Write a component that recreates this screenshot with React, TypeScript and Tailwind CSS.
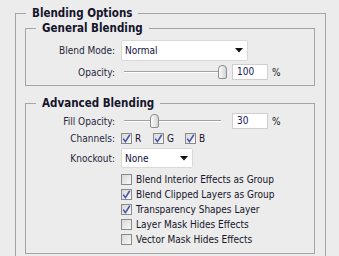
import React from "react";

const font = { fontFamily: '"DejaVu Sans Condensed", "DejaVu Sans", Tahoma, sans-serif', fontStretch: "condensed" };

function Legend({ children, outer }: { children: React.ReactNode; outer?: boolean }) {
  return (
    <legend
      className={`${outer ? "ml-[1px]" : "ml-[10px]"} px-[6px] text-[11.5px] leading-[14px] font-bold text-[#14142a]`}
    >
      {children}
    </legend>
  );
}

function Label({ children }: { children: React.ReactNode }) {
  return <span className="w-[90px] shrink-0 text-right text-[10px] text-[#26263a] pr-[1px]">{children}</span>;
}

function Arrow() {
  return (
    <svg width="8" height="5" viewBox="0 0 8 5" className="shrink-0">
      <path d="M0 0 H8 L4 4.5 Z" fill="#111" />
    </svg>
  );
}

function Select({ value, width }: { value: string; width: string }) {
  return (
    <div
      className={`${width} flex items-center justify-between bg-white border border-[#d9d9d9] rounded-[2px] pl-[3px] pr-[4px] text-[10px] text-[#10103a]`}
    >
      <span>{value}</span>
      <Arrow />
    </div>
  );
}

function Slider({ value }: { value: number }) {
  return (
    <div className="relative w-[106px] h-[16px]">
      <div className="absolute left-[3px] right-[6px] top-[7px] h-[2px] border-t border-[#a2a2a2] border-b border-b-white" />
      <div
        className="absolute top-[1px] w-[9px] h-[14px] rounded-t-[4px] rounded-b-[2px] border border-[#8d8d8d] bg-gradient-to-r from-[#fbfbfb] to-[#d4d4d4]"
        style={{ left: `${Math.round(value * 0.97)}px` }}
      />
    </div>
  );
}

function NumField({ value }: { value: string }) {
  return (
    <div className="ml-[5px] w-[36px] h-[16px] bg-white border border-[#cfcfcf] pl-[4px] text-[10px] leading-[14px] text-[#15155a]">
      {value}
    </div>
  );
}

function Check({ on }: { on: boolean }) {
  return (
    <span className="w-[11px] h-[11px] shrink-0 border border-[#8a8a8a] bg-gradient-to-br from-[#d8d8d8] to-[#f8f8f8] flex items-center justify-center">
      {on && (
        <svg width="9" height="9" viewBox="0 0 9 9">
          <path d="M1.2 4.6 L3.4 7.6 L7.8 0.8" stroke="#4758a6" strokeWidth="1.6" fill="none" />
        </svg>
      )}
    </span>
  );
}

const options = [
  { label: "Blend Interior Effects as Group", on: false },
  { label: "Blend Clipped Layers as Group", on: true },
  { label: "Transparency Shapes Layer", on: true },
  { label: "Layer Mask Hides Effects", on: false },
  { label: "Vector Mask Hides Effects", on: false },
];

export default function App() {
  return (
    <div className="w-[339px] h-[256px] overflow-hidden bg-[#ececec] pl-[15px] pr-[13px] pt-[6px]" style={font}>
      <fieldset className="border border-[#a4a4a4] pl-[9px] pr-[10px] pb-[30px]">
        <Legend outer>Blending Options</Legend>

        <fieldset className="border border-[#a4a4a4] mt-[1px] pb-[5px]">
          <Legend>General Blending</Legend>
          <div className="flex items-center mt-[5px] gap-[5px]">
            <Label>Blend Mode:</Label>
            <Select value="Normal" width="w-[127px] h-[21px]" />
          </div>
          <div className="flex items-center mt-[3px] gap-[5px]">
            <Label>Opacity:</Label>
            <div className="flex items-center">
              <Slider value={100} />
              <NumField value="100" />
              <span className="ml-[4px] text-[10px] text-[#14142a]">%</span>
            </div>
          </div>
        </fieldset>

        <fieldset className="border border-[#a4a4a4] mt-[10px] pb-[6px]">
          <Legend>Advanced Blending</Legend>
          <div className="flex items-center mt-[3px] gap-[5px]">
            <Label>Fill Opacity:</Label>
            <div className="flex items-center">
              <Slider value={30} />
              <NumField value="30" />
              <span className="ml-[4px] text-[10px] text-[#14142a]">%</span>
            </div>
          </div>
          <div className="flex items-center mt-[1px] h-[16px] gap-[5px]">
            <Label>Channels:</Label>
            <div className="flex items-center">
              {["R", "G", "B"].map((c) => (
                <span key={c} className="w-[32px] flex items-center gap-[3px] text-[10px] text-[#14142a]">
                  <Check on />
                  {c}
                </span>
              ))}
            </div>
          </div>
          <div className="flex items-center mt-[2px] gap-[5px]">
            <Label>Knockout:</Label>
            <Select value="None" width="w-[72px] h-[20px]" />
          </div>
          <div className="flex flex-col mt-[4px] pl-[95px]">
            {options.map((o) => (
              <label key={o.label} className="h-[15px] flex items-center gap-[4px] text-[10px] text-[#14142a]">
                <Check on={o.on} />
                {o.label}
              </label>
            ))}
          </div>
        </fieldset>
      </fieldset>
    </div>
  );
}
